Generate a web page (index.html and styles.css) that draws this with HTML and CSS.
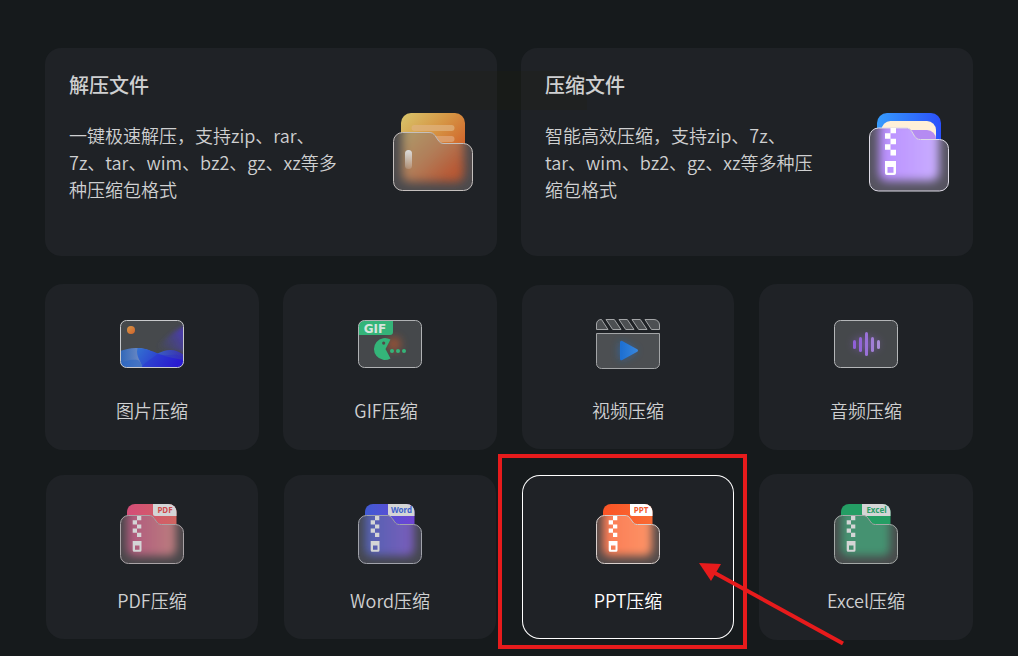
FILE: index.html
```html
<!DOCTYPE html>
<html lang="zh-CN">
<head>
<meta charset="utf-8">
<title>压缩工具</title>
<link rel="stylesheet" href="styles.css">
</head>
<body>
<svg class="defs" width="0" height="0" aria-hidden="true">
  <defs>
    <path id="front" d="M.5 21.500a8 8 0 0 1 8-8H29c2.500 0 4 1 5.300 3l2.400 3.400c1.200 1.800 2.400 2.600 4.800 2.600h14a8 8 0 0 1 8 8v23a8 8 0 0 1-8 8h-47a8 8 0 0 1-8-8z"/>
    <clipPath id="front-clip"><use href="#front"/></clipPath>
    <g id="zip">
      <path d="M17 14h4.300v4.200H17zM12.700 18.200H17v4.200h-4.300zM17 22.400h4.300v4.200H17zM12.700 26.600H17v4.200h-4.300zM17 30.800h4.300V35H17z"/>
      <path fill-rule="evenodd" d="M12.700 39h8.800v9.200a1.500 1.500 0 0 1-1.500 1.500h-5.800a1.500 1.500 0 0 1-1.500-1.500zM15 43.500v4.200h4.500v-4.200z"/>
    </g>
    <filter id="blur2" x="-30%" y="-30%" width="160%" height="160%"><feGaussianBlur stdDeviation="2"/></filter>
    <filter id="blur4" x="-60%" y="-60%" width="220%" height="220%"><feGaussianBlur stdDeviation="4"/></filter>
    <filter id="blur5" x="-30%" y="-30%" width="160%" height="160%"><feGaussianBlur stdDeviation="5"/></filter>
    <linearGradient id="orange" x1="0" y1="0" x2="1" y2="1"><stop offset="0" stop-color="#d8c66c"/><stop offset=".4" stop-color="#d69544"/><stop offset=".75" stop-color="#d0622a"/></linearGradient>
    <linearGradient id="orange-glow" x1="0" y1="0" x2="1" y2="1"><stop offset="0" stop-color="#ada06e"/><stop offset=".5" stop-color="#b17c58"/><stop offset=".85" stop-color="#b85632"/></linearGradient>
    <linearGradient id="blue" x1="0" y1="0" x2="1" y2="0"><stop offset="0" stop-color="#369cfd"/><stop offset="1" stop-color="#2b50fb"/></linearGradient>
    <linearGradient id="lilac" x1="0" y1="0" x2="1" y2="0"><stop offset="0" stop-color="#b98eff"/><stop offset="1" stop-color="#c9aeff"/></linearGradient>
    <linearGradient id="pill" x1="0" y1="0" x2="0" y2="1"><stop offset="0" stop-color="#dcdcdc"/><stop offset="1" stop-color="#dcdcdc" stop-opacity=".2"/></linearGradient>
    <linearGradient id="pdf" x1="0" y1="0" x2="1" y2="0"><stop offset="0" stop-color="#d44d78"/><stop offset="1" stop-color="#d06560"/></linearGradient>
    <linearGradient id="pdf-glow" x1="0" y1="0" x2="1" y2="0"><stop offset="0" stop-color="#b0587e"/><stop offset="1" stop-color="#bb7d7e"/></linearGradient>
    <linearGradient id="word" x1="0" y1="0" x2="1" y2="0"><stop offset="0" stop-color="#405bd4"/><stop offset="1" stop-color="#7044d3"/></linearGradient>
    <linearGradient id="word-glow" x1="0" y1="0" x2="1" y2="0"><stop offset="0" stop-color="#5263b2"/><stop offset="1" stop-color="#7a5cbb"/></linearGradient>
    <linearGradient id="ppt" x1="0" y1="0" x2="1" y2="0"><stop offset="0" stop-color="#fa5426"/><stop offset="1" stop-color="#f96b34"/></linearGradient>
    <linearGradient id="ppt-glow" x1="0" y1="0" x2="1" y2="0"><stop offset="0" stop-color="#fb7a53"/><stop offset="1" stop-color="#fd9467"/></linearGradient>
    <linearGradient id="sun" x1="0" y1="0" x2="1" y2="1"><stop offset="0" stop-color="#d99847"/><stop offset="1" stop-color="#d0622b"/></linearGradient>
    <linearGradient id="hill" x1="0" y1="0" x2="1" y2="0"><stop offset="0" stop-color="#2f66b8"/><stop offset=".4" stop-color="#6585c2"/></linearGradient>
    <linearGradient id="sea" x1="0" y1="0" x2="1" y2=".3"><stop offset="0" stop-color="#3272d0"/><stop offset="1" stop-color="#2a18d0"/></linearGradient>
    <linearGradient id="sea-back" x1="0" y1="0" x2="1" y2="0"><stop offset="0" stop-color="#386dcc"/><stop offset="1" stop-color="#3a30ae"/></linearGradient>
    <linearGradient id="beam" x1="0" y1=".8" x2="1" y2=".3"><stop offset="0" stop-color="#454a8c" stop-opacity="0"/><stop offset="1" stop-color="#4a38b8"/></linearGradient>
    <linearGradient id="play" x1="0" y1="0" x2="1" y2="0"><stop offset="0" stop-color="#1e70d2"/><stop offset="1" stop-color="#3685dc"/></linearGradient>
    <clipPath id="frame-clip"><rect x=".5" y=".5" width="63" height="47" rx="6"/></clipPath>
  </defs>
</svg>

<main class="page">
  <span class="smudge"></span>
  <section class="features">
    <a class="feature" href="#extract">
      <span class="feature-text">
        <span class="feature-title">解压文件</span>
        <span class="feature-desc">一键极速解压，支持zip、rar、7z、tar、wim、bz2、gz、xz等多种压缩包格式</span>
      </span>
      <svg class="feature-icon" viewBox="0 0 80 80" aria-hidden="true">
        <clipPath id="extract-clip"><path d="M.5 29.500a9 9 0 0 1 9-9H36c3 0 4.500 1 6 3l3 4.500c1.700 2.500 3 3.500 6 3.500h19.500a9 9 0 0 1 9 9v29a9 9 0 0 1-9 9h-61a9 9 0 0 1-9-9z"/></clipPath>
        <rect x="8" y="1" width="64" height="66" rx="10" fill="url(#orange)"/>
        <rect x="18.500" y="13" width="43" height="6" rx="3" fill="#dfb27c" opacity=".75"/>
        <rect x="18.500" y="24" width="43" height="6" rx="3" fill="#dfa678" opacity=".75"/>
        <g clip-path="url(#extract-clip)">
          <rect width="80" height="80" fill="#4b4a4d"/>
          <rect x="9" y="12" width="62" height="58" rx="8" fill="url(#orange-glow)" filter="url(#blur5)"/>
        </g>
        <path d="M.5 29.500a9 9 0 0 1 9-9H36c3 0 4.500 1 6 3l3 4.500c1.700 2.500 3 3.500 6 3.500h19.500a9 9 0 0 1 9 9v29a9 9 0 0 1-9 9h-61a9 9 0 0 1-9-9z" fill="none" stroke="#c4bfbd"/>
        <rect x="12" y="38" width="7" height="19" rx="3.500" fill="url(#pill)"/>
      </svg>
    </a>
    <a class="feature" href="#compress">
      <span class="feature-text">
        <span class="feature-title">压缩文件</span>
        <span class="feature-desc">智能高效压缩，支持zip、7z、tar、wim、bz2、gz、xz等多种压缩包格式</span>
      </span>
      <svg class="feature-icon" viewBox="0 0 80 80" aria-hidden="true">
        <clipPath id="compress-clip"><path d="M.5 25a9 9 0 0 1 9-9H37c2.500 0 4 1 5.500 3l3 5c1.700 2.500 3 3.500 6 3.500h19a9 9 0 0 1 9 9v33.500a9 9 0 0 1-9 9h-61a9 9 0 0 1-9-9z"/></clipPath>
        <rect x="8" y="1" width="64" height="60" rx="10" fill="url(#blue)"/>
        <rect x="12.500" y="9" width="54.500" height="50" rx="9" fill="#fff0d8"/>
        <path d="M20 18h38a9 9 0 0 1 9 9v20H20z" fill="#b58bf2"/>
        <g clip-path="url(#compress-clip)">
          <rect width="80" height="80" fill="#55535f"/>
          <rect x="10" y="8" width="60" height="61" rx="8" fill="url(#lilac)" filter="url(#blur5)"/>
        </g>
        <path d="M.5 25a9 9 0 0 1 9-9H37c2.500 0 4 1 5.500 3l3 5c1.700 2.500 3 3.500 6 3.500h19a9 9 0 0 1 9 9v33.500a9 9 0 0 1-9 9h-61a9 9 0 0 1-9-9z" fill="none" stroke="#dedbe6"/>
        <g fill="#fff">
          <path d="M21.500 16H27v5.300h-5.500zM16 21.300h5.500v5.500H16zM21.500 26.800H27v5.500h-5.500zM16 32.300h5.500v5.500H16zM21.500 37.800H27v5.800h-5.500z"/>
          <path fill-rule="evenodd" d="M16 49h11v12a2 2 0 0 1-2 2h-7a2 2 0 0 1-2-2zm2.500 6v5.700h6V55z"/>
        </g>
      </svg>
    </a>
  </section>

  <nav class="tools" aria-label="压缩">
    <a class="tool" href="#image">
      <span class="tool-icon"><svg width="64" height="48" viewBox="0 0 64 48" aria-hidden="true">
        <rect x=".5" y=".5" width="63" height="47" rx="6" fill="#46494c"/>
        <g clip-path="url(#frame-clip)">
          <path d="M36 28C44 20 54 10 66 6v26z" fill="url(#beam)" filter="url(#blur2)"/>
          <path d="M28 36c8 0 13-6 22-6 6 0 10 2 14 5v13H28z" fill="url(#sea-back)"/>
          <path d="M0 31c5-2 12-3.500 18-3 9 .5 14 4 20 6.500L44 48H0z" fill="url(#hill)"/>
          <path d="M17.500 28c8 0 14 3 20.500 5.500C44 36 52 38 64 40v8H22c.5-6-7-11-4.500-20z" fill="url(#sea)"/>
          <path d="M0 48v-4c5-4 12-5 18-4 3 2 4 5 4 8z" fill="#2d67c4" opacity=".6"/>
          <path d="M22 48c1-5 8-8 16-14 8 3 16-2 26 3v11z" fill="#2923d0" opacity=".3"/>
        </g>
        <circle cx="11" cy="10" r="4" fill="url(#sun)"/>
        <rect x=".5" y=".5" width="63" height="47" rx="6" fill="none" stroke="#c9cacc"/>
      </svg></span>
      <span class="tool-label">图片压缩</span>
    </a>
    <a class="tool" href="#gif">
      <span class="tool-icon"><svg width="64" height="48" viewBox="0 0 64 48" aria-hidden="true">
        <rect x=".5" y=".5" width="63" height="47" rx="6" fill="#45484b"/>
        <circle cx="36" cy="24" r="7" fill="#b8572e" opacity=".75" filter="url(#blur4)"/>
        <path d="M.5 15V6.500a6 6 0 0 1 6-6H35V12a3 3 0 0 1-3 3z" fill="#34b479"/>
        <text class="gif-text" x="17" y="13" text-anchor="middle" fill="#d6e4dd">GIF</text>
        <path fill-rule="evenodd" d="M32.500 19.500A11 11 0 1 0 32.500 38.500L27.500 29zM25.700 21.500a1.600 1.600 0 1 1 0 3.200 1.600 1.600 0 0 1 0-3.200z" fill="#34b479"/>
        <g fill="#34b479"><circle cx="34" cy="31" r="2"/><circle cx="40" cy="31" r="2"/><circle cx="46" cy="31" r="2"/></g>
        <rect x=".5" y=".5" width="63" height="47" rx="6" fill="none" stroke="#b0b2b4"/>
      </svg></span>
      <span class="tool-label">GIF压缩&nbsp;&nbsp;</span>
    </a>
    <a class="tool tool-inset" href="#video">
      <span class="tool-icon"><svg width="64" height="64" viewBox="0 0 64 64" aria-hidden="true">
        <g fill="#4c4f52" stroke="#a3a5a7">
          <path d="M.5 17.500V12a5 5 0 0 1 5-4.500l6.500 10z"/>
          <path d="M10 7.500h8.300l6.700 10h-8.300zM23 7.500h8.300l6.700 10h-8.300zM36 7.500h8.300l6.700 10h-8.300z"/>
          <path d="M49 7.500h9a5.500 5.500 0 0 1 5.500 5.500v4.500h-8z"/>
          <path d="M.5 21.500h63v30a5 5 0 0 1-5 5h-53a5 5 0 0 1-5-5z"/>
        </g>
        <path d="M24 30l17 9-17 9z" fill="#2470c8" opacity=".7" filter="url(#blur4)"/>
        <path d="M25.500 30.200l15 8.300-15 8.300z" fill="url(#play)" stroke="url(#play)" stroke-width="3" stroke-linejoin="round"/>
      </svg></span>
      <span class="tool-label">视频压缩</span>
    </a>
    <a class="tool" href="#audio">
      <span class="tool-icon"><svg width="64" height="48" viewBox="0 0 64 48" aria-hidden="true">
        <rect x=".5" y=".5" width="63" height="47" rx="6" fill="#45484b" stroke="#b4b6b8"/>
        <ellipse cx="32" cy="24" rx="13" ry="7" fill="#8e62cc" opacity=".45" filter="url(#blur4)"/>
        <g stroke-width="3" stroke-linecap="round">
          <path d="M20.500 21.500v6" stroke="#8f5fd8"/><path d="M26.500 18.500v12" stroke="#9265d8"/><path d="M32.500 13.500v21" stroke="#9a71d8"/><path d="M38.500 18.500v12" stroke="#a17ed6"/><path d="M44.500 21.500v6" stroke="#a98cd6"/>
        </g>
      </svg></span>
      <span class="tool-label">音频压缩</span>
    </a>
    <a class="tool tool-inset" href="#pdf">
      <span class="tool-icon"><svg width="64" height="64" viewBox="0 0 64 64" aria-hidden="true">
        <rect x="7" y="2" width="49.500" height="46" rx="8" fill="url(#pdf)"/>
        <path d="M33 2h15.500a8 8 0 0 1 8 8v4H35a2 2 0 0 1-2-2z" fill="#d4d5d6"/>
        <text class="tag-text" x="45" y="11" text-anchor="middle" fill="#cf4a4b">PDF</text>
        <g clip-path="url(#front-clip)"><rect width="64" height="64" fill="#49474a"/><rect x="7" y="6" width="49" height="48" rx="7" fill="url(#pdf-glow)" filter="url(#blur4)"/></g>
        <use href="#front" fill="none" stroke="#a9a3a6"/>
        <use href="#zip" fill="#d4d5d6"/>
      </svg></span>
      <span class="tool-label">PDF压缩</span>
    </a>
    <a class="tool tool-inset" href="#word">
      <span class="tool-icon"><svg width="64" height="64" viewBox="0 0 64 64" aria-hidden="true">
        <rect x="7" y="2" width="49.500" height="46" rx="8" fill="url(#word)"/>
        <path d="M30 2h18.500a8 8 0 0 1 8 8v4H32a2 2 0 0 1-2-2z" fill="#d4d5d6"/>
        <text class="tag-text" x="43.500" y="11" text-anchor="middle" fill="#3d62cc">Word</text>
        <g clip-path="url(#front-clip)"><rect width="64" height="64" fill="#454750"/><rect x="7" y="6" width="49" height="48" rx="7" fill="url(#word-glow)" filter="url(#blur4)"/></g>
        <use href="#front" fill="none" stroke="#a1a3ab"/>
        <use href="#zip" fill="#d4d5d6"/>
      </svg></span>
      <span class="tool-label">Word压缩</span>
    </a>
    <div class="marked">
      <a class="tool tool-inset tool-active" href="#ppt" aria-current="true">
        <span class="tool-icon"><svg width="64" height="64" viewBox="0 0 64 64" aria-hidden="true">
          <rect x="7" y="2" width="49.500" height="46" rx="8" fill="url(#ppt)"/>
          <path d="M34 2h14.500a8 8 0 0 1 8 8v4H36a2 2 0 0 1-2-2z" fill="#fff"/>
          <text class="tag-text" x="45" y="11" text-anchor="middle" fill="#f2592c">PPT</text>
          <g clip-path="url(#front-clip)"><rect width="64" height="64" fill="#544b4a"/><rect x="7" y="6" width="49" height="48" rx="7" fill="url(#ppt-glow)" filter="url(#blur4)"/></g>
          <use href="#front" fill="none" stroke="#d8cfcc"/>
          <use href="#zip" fill="#fff"/>
        </svg></span>
        <span class="tool-label">PPT压缩</span>
      </a>
      <span class="mark-box"></span>
      <svg class="mark-arrow" width="146" height="84" viewBox="0 0 146 84" aria-hidden="true">
        <path d="M14 9l130 71.500" stroke="#e71b1c" stroke-width="4"/>
        <path d="M0 0l22 1-10 17z" fill="#e71b1c"/>
      </svg>
    </div>
    <a class="tool" href="#excel">
      <span class="tool-icon"><svg width="64" height="64" viewBox="0 0 64 64" aria-hidden="true">
        <rect x="7" y="2" width="49.500" height="46" rx="8" fill="#249e64"/>
        <path d="M28 2h20.500a8 8 0 0 1 8 8v4H30a2 2 0 0 1-2-2z" fill="#d4d5d6"/>
        <text class="tag-text" x="42.500" y="11" text-anchor="middle" fill="#2b9d68">Excel</text>
        <g clip-path="url(#front-clip)"><rect width="64" height="64" fill="#494b4c"/><rect x="7" y="6" width="49" height="48" rx="7" fill="#459271" filter="url(#blur4)"/></g>
        <use href="#front" fill="none" stroke="#a3a8a6"/>
        <use href="#zip" fill="#d4d5d6"/>
      </svg></span>
      <span class="tool-label">Excel压缩</span>
    </a>
  </nav>
</main>
</body>
</html>
```
FILE: styles.css
```css
* {
  box-sizing: border-box;
}

body {
  margin: 0;
  background: #161a1c;
  color: #cfd0d1;
  font-family: "Noto Sans CJK SC", sans-serif;
  font-size: 18px;
}

a {
  color: inherit;
  text-decoration: none;
}

.defs {
  position: absolute;
}

.page {
  position: relative;
  padding: 48px 45px 16px;
}

.features {
  display: grid;
  grid-template-columns: repeat(2, minmax(0, 1fr));
  gap: 24px;
  margin-bottom: 28px;
}

.feature {
  display: flex;
  align-items: center;
  justify-content: space-between;
  gap: 24px;
  min-height: 208px;
  padding: 24px;
  border-radius: 16px;
  background: #1f2226;
}

.feature-text {
  display: flex;
  flex-direction: column;
  align-self: flex-start;
  gap: 24px;
  max-width: 270px;
  position: relative;
  z-index: 2;
}

.feature-title {
  font-size: 20px;
  font-weight: 500;
  line-height: 26px;
}

.feature-desc {
  font-weight: 350;
  line-height: 27px;
}

.feature-icon {
  flex: none;
  width: 80px;
  height: 80px;
}

.tools {
  display: grid;
  grid-template-columns: repeat(4, minmax(0, 1fr));
  gap: 24px;
}

.tool {
  display: flex;
  flex-direction: column;
  align-items: center;
  gap: 21px;
  padding: 28px 12px 27px;
  border-radius: 18px;
  background: #1f2226;
}

.tool-inset {
  margin: 1px;
  padding: 27px 11px 26px;
}

.tool-active {
  color: #fff;
  box-shadow: inset 0 0 0 1px #fff;
}

.tool-icon {
  display: flex;
  align-items: center;
  height: 64px;
}

.tool-label {
  font-weight: 350;
  line-height: 26px;
}

.tag-text {
  font: 700 8px "Noto Sans", sans-serif;
}

.gif-text {
  font: 700 12px "DejaVu Sans", sans-serif;
}

.marked {
  position: relative;
}

.mark-box {
  position: absolute;
  inset: -20px -12px -9px -23px;
  border: 4px solid #e71b1c;
  pointer-events: none;
}

.mark-arrow {
  position: absolute;
  top: 89px;
  left: 178px;
  pointer-events: none;
}

.smudge {
  position: absolute;
  z-index: 1;
  top: 71px;
  left: 430px;
  width: 157px;
  height: 39px;
  background: rgba(32, 32, 12, 0.18);
  pointer-events: none;
}
```
